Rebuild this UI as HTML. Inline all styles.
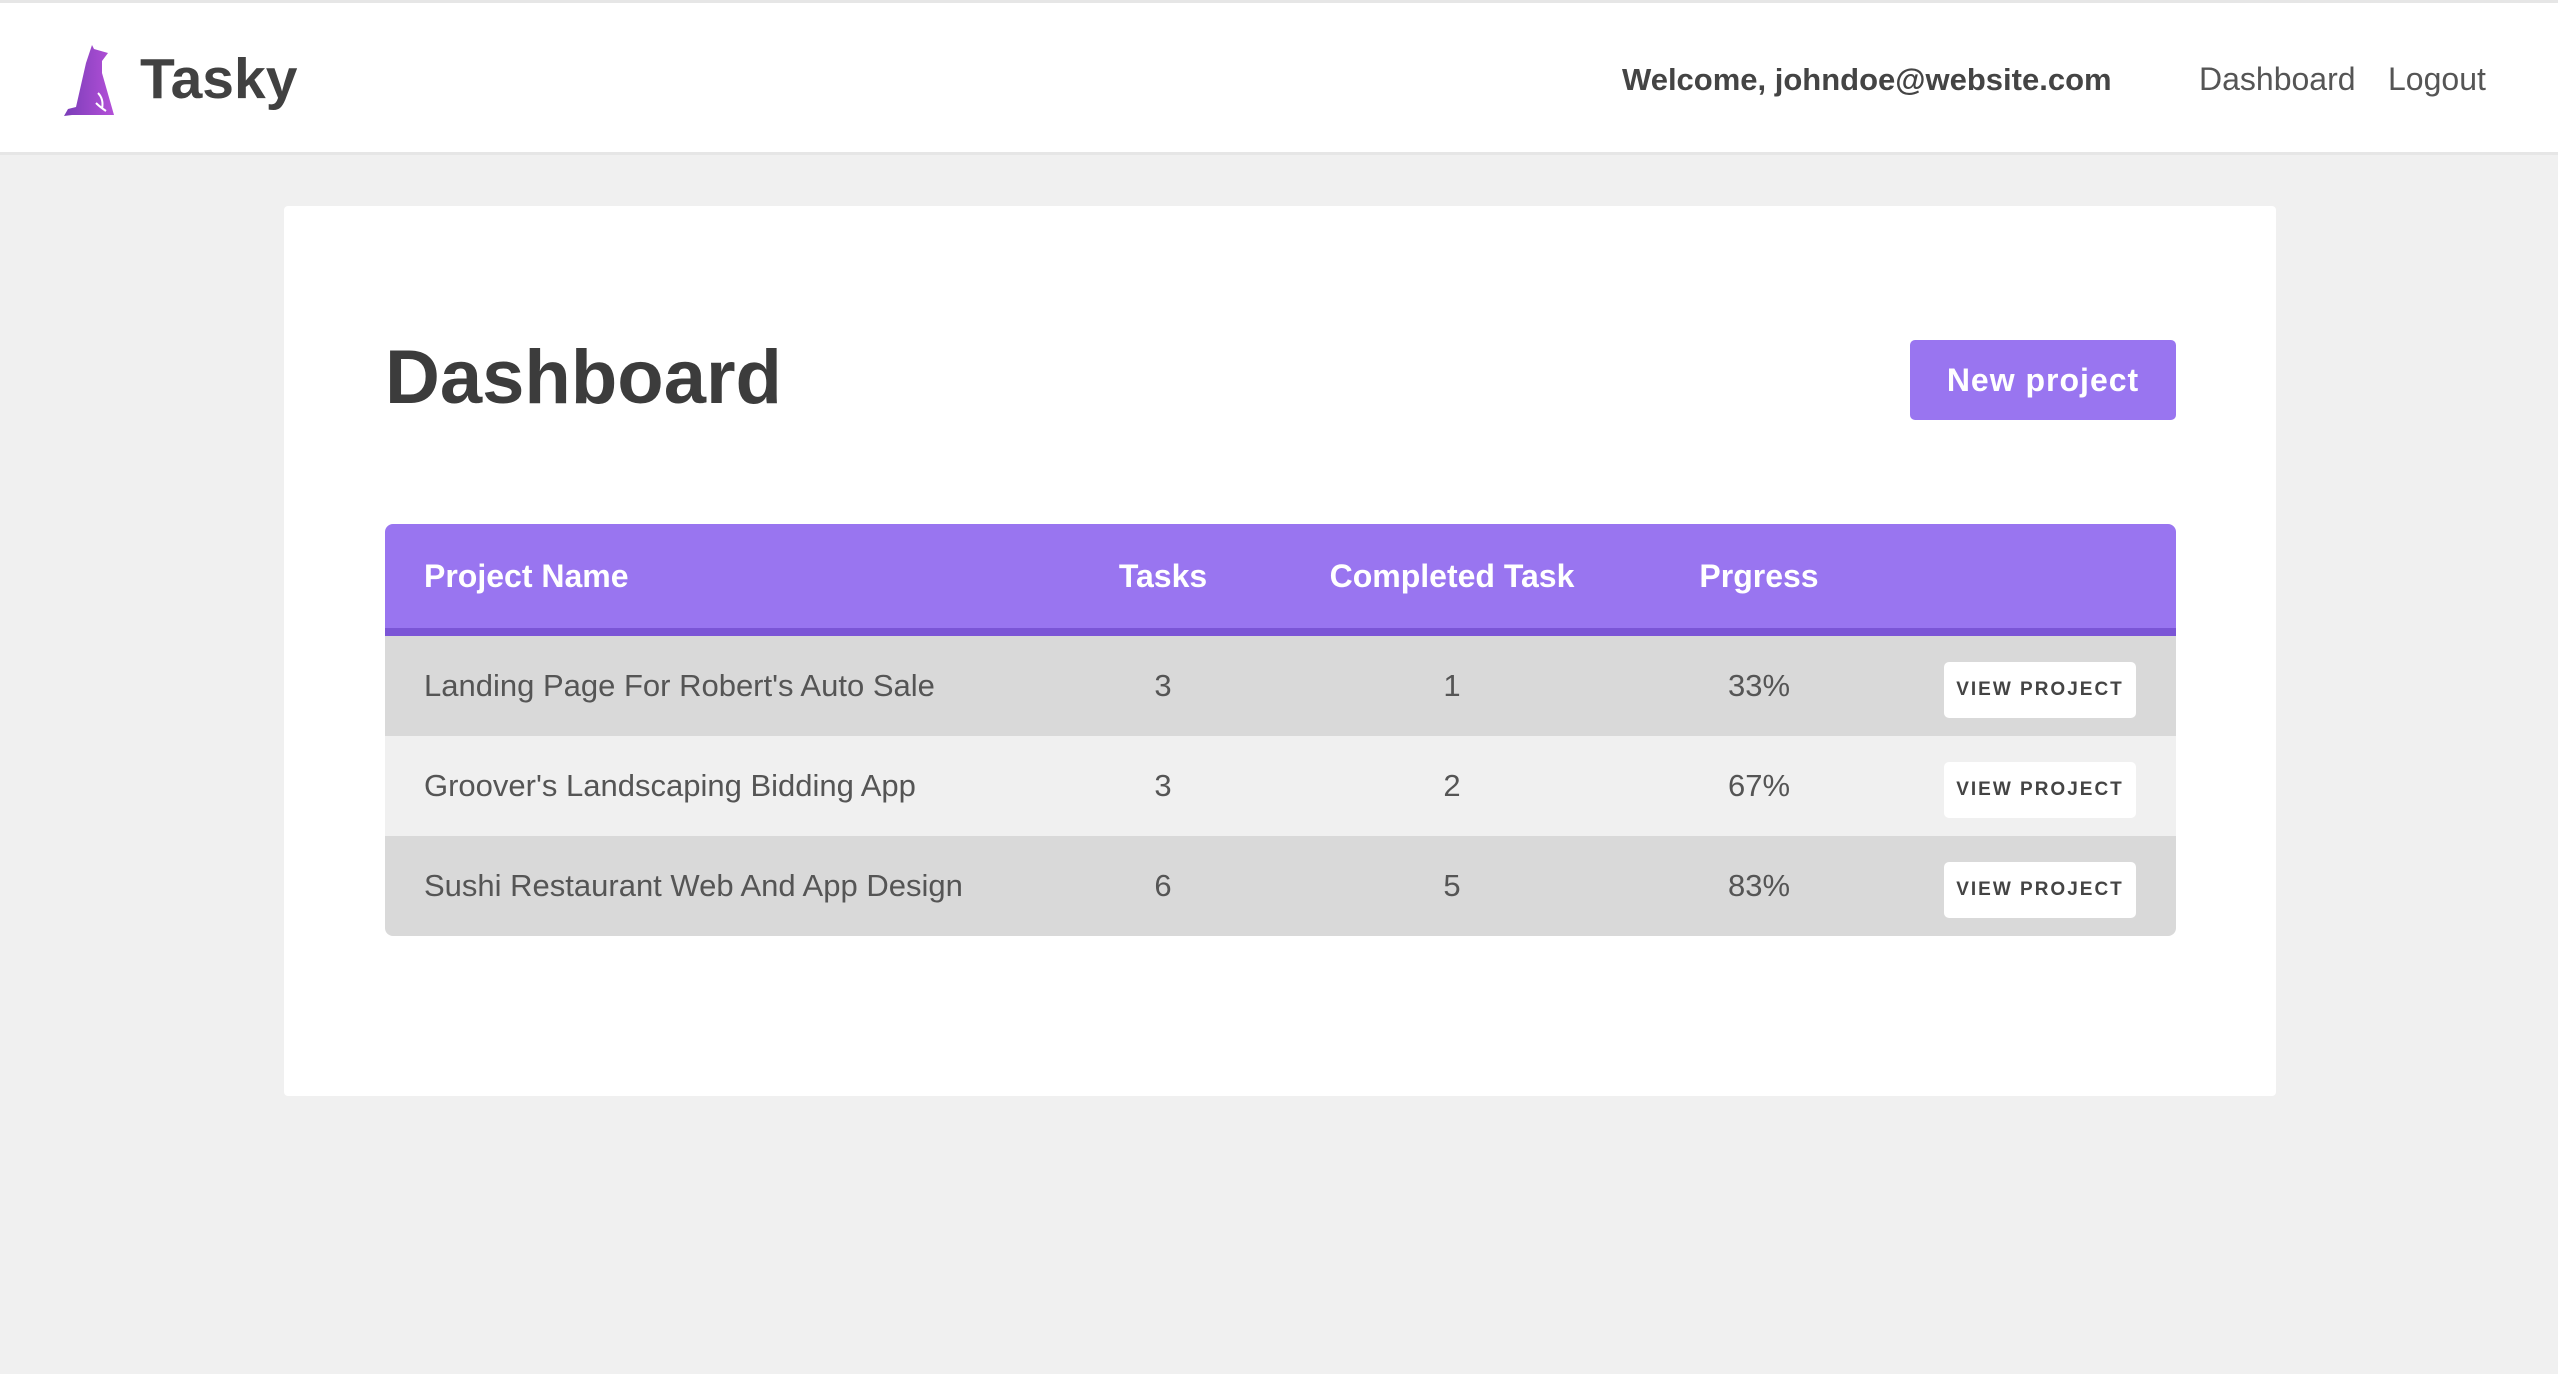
<!DOCTYPE html>
<html><head><meta charset="utf-8"><style>
*{margin:0;padding:0;box-sizing:border-box}
body{width:2558px;height:1374px;background:#f0f0f0;font-family:"Liberation Sans",sans-serif;color:#444;position:relative;overflow:hidden}
.hdr{position:absolute;left:0;top:0;width:2558px;height:155px;background:#fff;border-top:3px solid #e6e6e6;border-bottom:3px solid #e6e6e6}
.logo{position:absolute;left:62px;top:40px}
.brand{position:absolute;left:140px;top:43px;font-size:57px;font-weight:bold;color:#414141}
.welcome{position:absolute;left:1622px;top:59px;font-size:31px;font-weight:bold;color:#444}
.nav{position:absolute;top:58px;font-size:32px;color:#555}
.card{position:absolute;left:284px;top:206px;width:1992px;height:890px;background:#fff;border-radius:4px}
h1{position:absolute;left:385px;top:334px;font-size:76px;font-weight:bold;color:#3c3c3c}
.btn{position:absolute;left:1910px;top:340px;width:266px;height:80px;background:#9975f0;border-radius:5px;color:#fff;font-size:32px;font-weight:bold;text-align:center;line-height:80px;letter-spacing:1px}
.tbl{position:absolute;left:385px;top:524px;width:1791px;border-radius:8px;overflow:hidden}
.th{height:112px;background:#9975f0;border-bottom:8px solid #7b55d6;position:relative;color:#fff;font-weight:bold;font-size:32px}
.row{height:100px;position:relative;font-size:31px;color:#555}
.r1,.r3{background:#d9d9d9}.r2{background:#f0f0f0}
.c{position:absolute;top:0;line-height:100px;text-align:center;width:300px;margin-left:-150px}
.th .c{line-height:104px}
.n{position:absolute;left:39px;top:0;line-height:100px}
.th .n{line-height:104px}
.vb{position:absolute;left:1559px;top:26px;width:192px;height:56px;background:#fff;border-radius:5px;font-size:19px;font-weight:bold;letter-spacing:2px;text-align:center;line-height:56px;color:#444}
</style></head><body>
<div class="hdr">
<svg class="logo" width="56" height="76" viewBox="0 0 56 76"><defs><linearGradient id="g" x1="0" x2="1"><stop offset="0" stop-color="#7a3db8"/><stop offset="1" stop-color="#b450d8"/></linearGradient></defs>
<path d="M30 2 L32 6 L46 10 L40 18 L40 30 L52 72 L10 72 L2 73 L6 66 L14 64 L24 20 Z" fill="url(#g)"/>
<path d="M36 50 Q42 56 40 66 M34 60 Q38 64 44 68" stroke="#fff" stroke-width="2" fill="none"/></svg>
<div class="brand">Tasky</div>
<div class="welcome">Welcome, johndoe@website.com</div>
<div class="nav" style="left:2199px">Dashboard</div>
<div class="nav" style="left:2388px">Logout</div>
</div>
<div class="card"></div>
<h1>Dashboard</h1>
<div class="btn">New project</div>
<div class="tbl">
<div class="th"><span class="n">Project Name</span><span class="c" style="left:778px">Tasks</span><span class="c" style="left:1067px">Completed Task</span><span class="c" style="left:1374px">Prgress</span></div>
<div class="row r1"><span class="n">Landing Page For Robert's Auto Sale</span><span class="c" style="left:778px">3</span><span class="c" style="left:1067px">1</span><span class="c" style="left:1374px">33%</span><div class="vb">VIEW PROJECT</div></div>
<div class="row r2"><span class="n">Groover's Landscaping Bidding App</span><span class="c" style="left:778px">3</span><span class="c" style="left:1067px">2</span><span class="c" style="left:1374px">67%</span><div class="vb">VIEW PROJECT</div></div>
<div class="row r3"><span class="n">Sushi Restaurant Web And App Design</span><span class="c" style="left:778px">6</span><span class="c" style="left:1067px">5</span><span class="c" style="left:1374px">83%</span><div class="vb">VIEW PROJECT</div></div>
</div>
</body></html>
